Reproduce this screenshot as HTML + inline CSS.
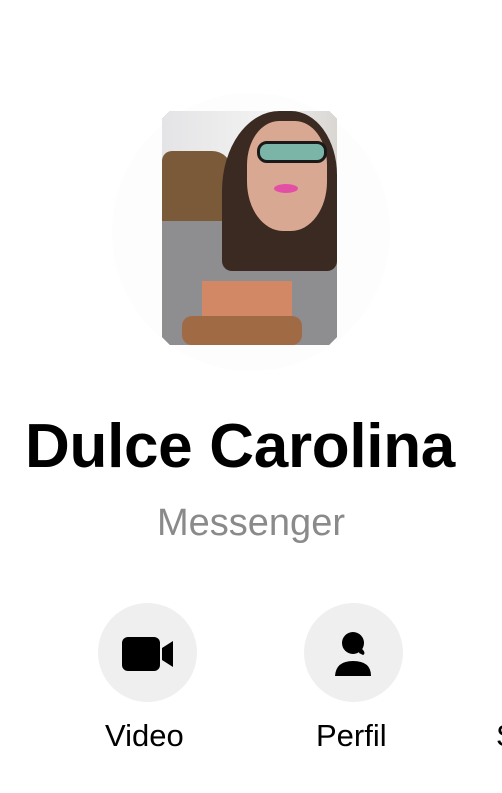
<!DOCTYPE html>
<html><head><style>
body{margin:0;width:502px;height:793px;background:#fff;overflow:hidden;position:relative;font-family:"Liberation Sans",Arial,sans-serif}
.halo{position:absolute;left:112px;top:93px;width:278px;height:278px;border-radius:50%;background:#fdfdfd}
.photo{position:absolute;left:162px;top:111px;width:175px;height:234px;overflow:hidden;
clip-path:polygon(8px 0,167px 0,175px 8px,175px 226px,167px 234px,8px 234px,0 226px,0 8px);
background:#8d8d8f}
.photo div{position:absolute}
.name{position:absolute;left:0;width:480px;text-align:center;top:411px;font-size:62px;font-weight:bold;color:#000;letter-spacing:-0.3px}
.sub{position:absolute;left:0;width:502px;text-align:center;top:502px;font-size:38px;color:#8a8a8a}
.btn{position:absolute;width:99px;height:99px;border-radius:50%;background:#efefef;top:603px}
.lbl{position:absolute;top:718px;font-size:31px;color:#000}
</style></head><body>
<div class="halo"></div>
<div class="photo">
 <div style="left:0;top:0;width:175px;height:90px;background:linear-gradient(90deg,#e4e4e6,#f2f2f2 60%,#d9d6d2)"></div>
 <div style="left:0;top:40px;width:70px;height:85px;background:#7a5a38;border-radius:10px 20px 0 0"></div>
 <div style="left:0;top:110px;width:175px;height:124px;background:#8e8e90"></div>
 <div style="left:60px;top:0;width:115px;height:160px;background:#3b2a22;border-radius:50% 40% 10px 10px"></div>
 <div style="left:85px;top:10px;width:80px;height:110px;background:#d9a893;border-radius:40% 40% 45% 45%"></div>
 <div style="left:95px;top:30px;width:70px;height:22px;border:3px solid #1a1a1a;border-radius:10px;box-sizing:border-box;background:#7ab5a8"></div>
 <div style="left:112px;top:73px;width:24px;height:9px;background:#e44fa6;border-radius:50%"></div>
 <div style="left:40px;top:170px;width:90px;height:40px;background:#e4875a;opacity:.8"></div>
 <div style="left:20px;top:205px;width:120px;height:29px;background:#a06a45;border-radius:10px"></div>
</div>
<div class="name">Dulce Carolina</div>
<div class="sub">Messenger</div>
<div class="btn" style="left:98px"><svg width="99" height="99" viewBox="0 0 99 99"><rect x="24" y="34" width="38" height="34" rx="6" fill="#000"/><path d="M64 45 L75 38 L75 64 L64 57 Z" fill="#000"/></svg></div>
<div class="btn" style="left:304px"><svg width="99" height="99" viewBox="0 0 99 99"><circle cx="49" cy="40" r="11" fill="#000"/><path d="M56 44 Q63 50 59 52 L55 50 Z" fill="#000"/><path d="M31 73 Q32 58 49 58 Q67 58 67 73 Z" fill="#000"/></svg></div>
<div class="lbl" style="left:105px">Video</div>
<div class="lbl" style="left:316px">Perfil</div>
<div class="lbl" style="left:496px">S</div>
</body></html>
